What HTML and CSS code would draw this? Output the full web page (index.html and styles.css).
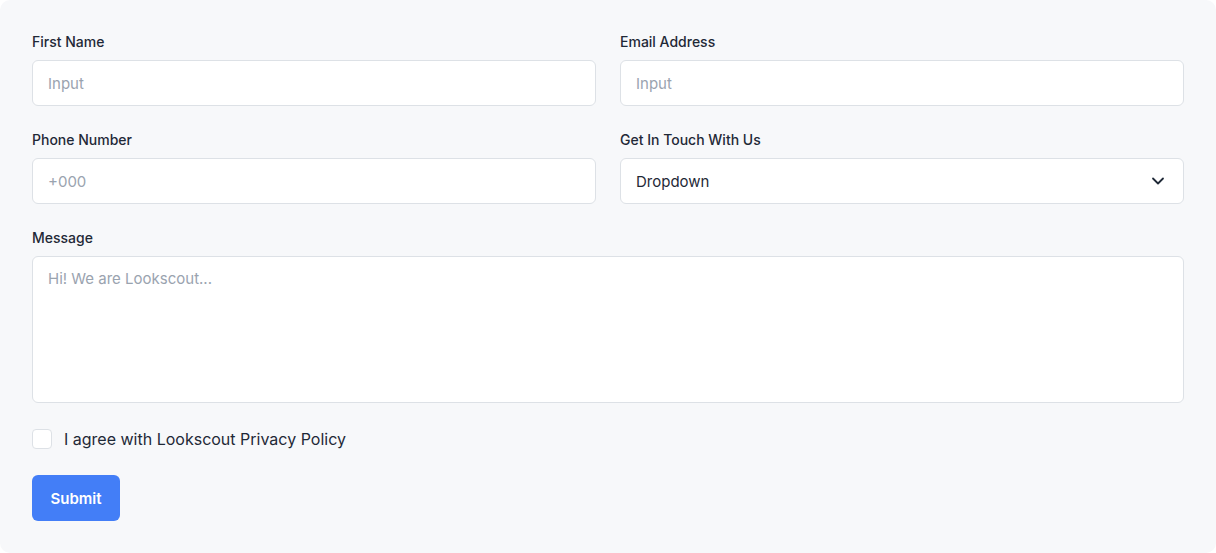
FILE: index.html
```html
<!DOCTYPE html>
<html lang="en">
<head>
<meta charset="utf-8">
<title>Contact form</title>
<link rel="stylesheet" href="styles.css">
</head>
<body>
<form class="card">
  <div class="grid">
    <label class="field">
      <span class="label">First Name</span>
      <input class="control" type="text" placeholder="Input">
    </label>
    <label class="field">
      <span class="label">Email Address</span>
      <input class="control" type="text" placeholder="Input">
    </label>
    <label class="field">
      <span class="label">Phone Number</span>
      <input class="control" type="text" placeholder="+000">
    </label>
    <label class="field">
      <span class="label">Get In Touch With Us</span>
      <span class="select">
        <span class="select-text">Dropdown</span>
        <svg class="chevron" width="16" height="16" viewBox="0 0 16 16" fill="none"><path d="M3 5.5l5 5 5-5" stroke="#1f2937" stroke-width="1.8" stroke-linecap="round" stroke-linejoin="round"/></svg>
      </span>
    </label>
    <label class="field wide">
      <span class="label">Message</span>
      <textarea class="control area" placeholder="Hi! We are Lookscout..."></textarea>
    </label>
  </div>
  <label class="agree">
    <span class="box"></span>
    <span>I agree with Lookscout Privacy Policy</span>
  </label>
  <div><button class="submit" type="button">Submit</button></div>
</form>
</body>
</html>
```
FILE: styles.css
```css
* { box-sizing: border-box; }
html, body { margin: 0; background: #ffffff; }
body { font-family: Inter, "Noto Sans", sans-serif; color: #1f2937; }
.card {
  width: 1216px;
  height: 553px;
  background: #f7f8fa;
  border-radius: 10px;
  padding: 32px;
  display: flex;
  flex-direction: column;
  gap: 24px;
}
.grid {
  display: grid;
  grid-template-columns: 1fr 1fr;
  column-gap: 24px;
  row-gap: 24px;
}
.field { display: flex; flex-direction: column; gap: 8px; }
.wide { grid-column: 1 / -1; }
.label { font-size: 14px; line-height: 20px; font-weight: 450; color: #1f2937; }
.control {
  height: 46px;
  border: 1px solid #dde1e6;
  border-radius: 6px;
  background: #ffffff;
  padding: 0 15px;
  font-family: inherit;
  font-size: 15px;
  color: #1f2937;
  outline: none;
}
.control::placeholder { color: #9aa3af; }
.area { height: 147px; resize: none; padding: 12px 15px; line-height: 20px; }
.select {
  height: 46px;
  border: 1px solid #dde1e6;
  border-radius: 6px;
  background: #ffffff;
  padding: 0 17px 0 15px;
  display: flex;
  align-items: center;
  justify-content: space-between;
  font-size: 15px;
  color: #1f2937;
}
.agree {
  display: flex;
  align-items: center;
  gap: 12px;
  height: 24px;
  font-size: 16px;
  color: #1f2937;
}
.box {
  width: 20px;
  height: 20px;
  border: 1.5px solid #dde1e6;
  border-radius: 4px;
  background: #ffffff;
}
.submit {
  width: 88px;
  height: 46px;
  border: none;
  border-radius: 6px;
  background: #437ef7;
  color: #ffffff;
  font-family: inherit;
  font-size: 15px;
  font-weight: 600;
}
```
